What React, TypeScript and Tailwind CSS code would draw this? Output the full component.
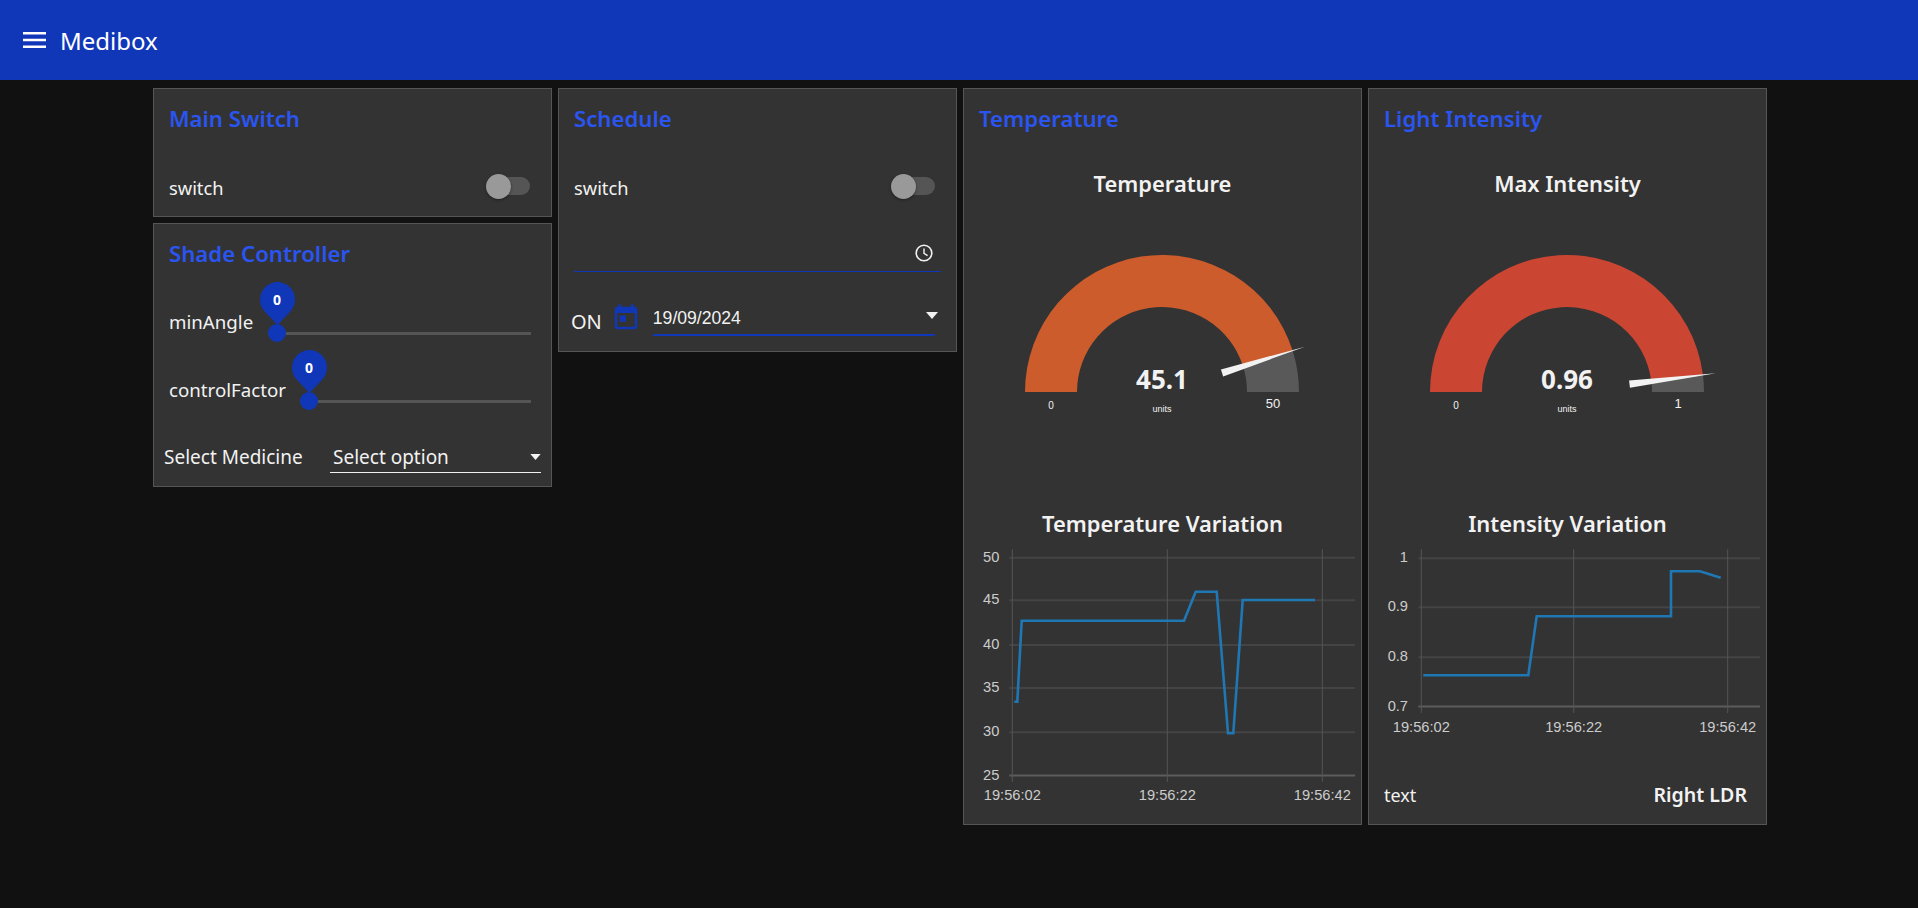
const sans = "font-['Noto_Sans','Open_Sans',sans-serif]";

const Toggle = () => (
  <div className="relative ml-auto h-[25px] w-[44px]">
    <div className="absolute left-[3px] right-0 top-[3.5px] h-[18px] rounded-full bg-[#555555]" />
    <div className="absolute left-0 top-0 h-[25px] w-[25px] rounded-full bg-[#999999] shadow-[0_1px_3px_rgba(0,0,0,0.4)]" />
  </div>
);

const Caret = ({ className }: { className: string }) => (
  <svg viewBox="0 0 12 7" className={className}>
    <path d="M0 0h12L6 7z" fill="#f2f2f2" />
  </svg>
);

const CardTitle = ({ children }: { children: string }) => (
  <div className="flex h-[58px] items-center pl-[15px] pt-[2px] text-[22.2px] font-semibold text-[#2a55f0]">{children}</div>
);

const Card = ({ height, children }: { height: string; children: React.ReactNode }) => (
  <section className={`${height} w-[399px] border border-[#555555] bg-[#333333]`}>{children}</section>
);

const SwitchRow = () => (
  <div className="mt-[15px] flex h-[48px] items-center pl-[15px] pr-[21px]">
    <span className="mt-[4px] text-[18.3px] text-[#f2f2f2]">switch</span>
    <Toggle />
  </div>
);

const SliderRow = ({ label, labelWidth, top }: { label: string; labelWidth: string; top: string }) => (
  <div className={`${top} flex h-[44px] items-center pl-[15px] pr-[20px]`}>
    <span className={`${labelWidth} mb-[1px] shrink-0 text-[18.7px] text-[#f2f2f2]`}>{label}</span>
    <div className="relative mt-[20px] flex h-[18px] flex-1 items-center">
      <div className="h-[3px] w-full bg-[#555555]" />
      <div className="absolute left-0 top-0 h-[18px] w-[18px] rounded-full bg-[#1037b8]" />
      <div className="absolute left-[-8.5px] top-[-42px] h-[43px] w-[35px]">
        <svg viewBox="0 0 35 43" className="h-[43px] w-[35px]">
          <path d="M17.5 43L5.1 29.9A17.5 17.5 0 1 1 29.9 29.9Z" fill="#1037b8" />
        </svg>
        <span className="absolute inset-x-0 top-[8px] text-center text-[14px] leading-[20px] font-bold text-white">0</span>
      </div>
    </div>
  </div>
);

const Gauge = ({ x0, cx, value, max, color, angle }: { x0: number; cx: number; value: string; max: string; color: string; angle: number }) => {
  const R = 137;
  const r = 85;
  const rad = (angle * Math.PI) / 180;
  const cy = 392;
  const px = (radius: number, a: number) => cx + radius * Math.cos(a);
  const py = (radius: number, a: number) => cy - radius * Math.sin(a);
  const arc = (from: number, to: number) =>
    `M${px(R, from)} ${py(R, from)}A${R} ${R} 0 0 1 ${px(R, to)} ${py(R, to)}L${px(r, to)} ${py(r, to)}A${r} ${r} 0 0 0 ${px(r, from)} ${py(r, from)}Z`;
  const nx = Math.sin(rad) * 3.6;
  const ny = Math.cos(rad) * 3.6;
  return (
    <svg viewBox={`${x0} 201 397 304`} className="block h-[304px] w-[397px]">
      <path d={arc(rad, 0)} fill="#595959" />
      <path d={arc(Math.PI, rad)} fill={color} />
      <polygon
        points={`${px(63, rad) - nx} ${py(63, rad) - ny} ${px(63, rad) + nx} ${py(63, rad) + ny} ${px(150, rad)} ${py(150, rad)}`}
        fill="#f2f2f2"
      />
      <text x={cx} y={389} textAnchor="middle" fontSize="26" fontWeight="700" fill="#f2f2f2" fontFamily="Noto Sans">{value}</text>
      <text x={cx} y={412} textAnchor="middle" fontSize="9" fill="#f2f2f2" fontFamily="Liberation Sans">units</text>
      <text x={cx - 111} y={409} textAnchor="middle" fontSize="10" fill="#f2f2f2" fontFamily="Liberation Sans">0</text>
      <text x={cx + 111} y={408} textAnchor="middle" fontSize="13" fill="#f2f2f2" fontFamily="Liberation Sans">{max}</text>
    </svg>
  );
};

type ChartProps = {
  viewBox: string;
  heightClass: string;
  xs: number[];
  yTicks: [string, number][];
  left: number;
  right: number;
  labelRight: number;
  top: number;
  bottom: number;
  labelY: number;
  points: string;
};

const Chart = ({ viewBox, heightClass, xs, yTicks, left, right, labelRight, top, bottom, labelY, points }: ChartProps) => {
  const times = ['19:56:02', '19:56:22', '19:56:42'];
  return (
    <svg viewBox={viewBox} className={`block w-[397px] ${heightClass}`}>
      {yTicks.map(([t, y], i) => (
        <g key={t}>
          <line x1={left - 3} x2={right} y1={y} y2={y} stroke={i === yTicks.length - 1 ? '#5c5c5c' : '#444444'} strokeWidth="2" />
          <text x={labelRight} y={y + 4} textAnchor="end" fontSize="14.67" fill="#cccccc" fontFamily="Liberation Sans">{t}</text>
        </g>
      ))}
      {xs.map((x, i) => (
        <g key={x}>
          <line x1={x} x2={x} y1={top} y2={bottom} stroke="#555555" strokeWidth="1" />
          <text x={x} y={labelY} textAnchor="middle" fontSize="14.67" fill="#cccccc" fontFamily="Liberation Sans">{times[i]}</text>
        </g>
      ))}
      <polyline points={points} fill="none" stroke="#1f77b4" strokeWidth="2.6" />
    </svg>
  );
};

const WidgetTitle = ({ children, className }: { children: string; className: string }) => (
  <div className={`${className} flex items-center justify-center text-[21.9px] font-semibold text-[#f2f2f2]`}>{children}</div>
);

export default function App() {
  return (
    <div className={`${sans} min-h-[908px] bg-[#111111]`}>
      <header className="flex h-[80px] items-center bg-[#1037b8] pl-[23px] text-white">
        <svg viewBox="0 0 23 16" className="h-[16px] w-[23px]">
          <path d="M0 0h23v2.4H0zM0 6.8h23v2.4H0zM0 13.6h23V16H0z" fill="#ffffff" />
        </svg>
        <span className="ml-[14px] mt-[2px] text-[24px]">Medibox</span>
      </header>

      <main className="flex gap-[6px] pl-[153px] pt-[8px]">
        <div className="flex flex-col gap-[6px]">
          <Card height="h-[129px]">
            <CardTitle>Main Switch</CardTitle>
            <SwitchRow />
          </Card>
          <Card height="h-[264px]">
            <CardTitle>Shade Controller</CardTitle>
            <SliderRow label="minAngle" labelWidth="w-[99px]" top="mt-[19px]" />
            <SliderRow label="controlFactor" labelWidth="w-[131px]" top="mt-[24px]" />
            <div className="mt-[28px] flex h-[32px] items-center pl-[10px] pr-[10px] text-[19px] text-[#f2f2f2]">
              <span className="w-[166px] shrink-0">Select Medicine</span>
              <div className="flex h-[32px] flex-1 items-center border-b border-[#f2f2f2] pl-[3px] pt-[1px]">
                <span>Select option</span>
                <Caret className="ml-auto h-[6px] w-[11px]" />
              </div>
            </div>
          </Card>
        </div>

        <Card height="h-[264px]">
          <CardTitle>Schedule</CardTitle>
          <SwitchRow />
          <div className="ml-[15px] mr-[15px] mt-[25px] flex h-[37px] items-center justify-end border-b border-[#1037b8] pb-[1px] pr-[8px]">
            <svg viewBox="0 0 18 18" className="h-[18px] w-[18px]">
              <circle cx="9" cy="9" r="7.8" fill="none" stroke="#f2f2f2" strokeWidth="1.6" />
              <path d="M9 4.5V9.4l3.6 2.2" fill="none" stroke="#f2f2f2" strokeWidth="1.4" />
            </svg>
          </div>
          <div className="ml-[12px] mt-[28px] flex h-[36px] items-center">
            <span className="mt-[8px] text-[20px] text-[#f2f2f2]">ON</span>
            <svg viewBox="0 0 24 24" className="ml-[9px] h-[30px] w-[30px] shrink-0">
              <path
                d="M19 3h-1V1h-2v2H8V1H6v2H5c-1.11 0-1.99.9-1.99 2L3 19c0 1.1.89 2 2 2h14c1.1 0 2-.9 2-2V5c0-1.1-.9-2-2-2zm0 16H5V8h14v11zM7 10h5v5H7z"
                fill="#1037b8"
              />
            </svg>
            <div className="ml-[12px] flex h-[35px] w-[282px] items-center border-b-2 border-[#1037b8] pt-[2px] font-['Liberation_Sans',sans-serif] text-[17.6px] text-[#f2f2f2]">
              <span>19/09/2024</span>
              <Caret className="ml-auto mb-[6px] mr-[-3px] h-[7px] w-[12px]" />
            </div>
          </div>
        </Card>

        <Card height="h-[737px]">
          <CardTitle>Temperature</CardTitle>
          <WidgetTitle className="mt-[20px] h-[34px]">Temperature</WidgetTitle>
          <Gauge x0={964} cx={1162} value="45.1" max="50" color="#cd5c2d" angle={17.6} />
          <WidgetTitle className="h-[38px]">Temperature Variation</WidgetTitle>
          <Chart
            viewBox="964 543 397 268"
            heightClass="h-[268px]"
            xs={[1012.3, 1167.3, 1322.3]}
            yTicks={[['50', 557.7], ['45', 600.3], ['40', 645], ['35', 688], ['30', 732.3], ['25', 775.5]]}
            left={1012.3}
            right={1355}
            labelRight={999.3}
            top={549.3}
            bottom={782}
            labelY={800}
            points="1014.3,701.7 1017.3,701.7 1021.7,620.7 1184,620.7 1195.7,591.7 1216.7,591.7 1228,733.3 1233.3,733.3 1242.7,600 1315,600"
          />
        </Card>

        <Card height="h-[737px]">
          <CardTitle>Light Intensity</CardTitle>
          <WidgetTitle className="mt-[20px] h-[34px]">Max Intensity</WidgetTitle>
          <Gauge x0={1369} cx={1567} value="0.96" max="1" color="#ca4633" angle={7.2} />
          <WidgetTitle className="h-[38px]">Intensity Variation</WidgetTitle>
          <Chart
            viewBox="1369 543 397 217"
            heightClass="h-[217px]"
            xs={[1421.3, 1573.7, 1727.7]}
            yTicks={[['1', 558.3], ['0.9', 607.3], ['0.8', 657.3], ['0.7', 706.5]]}
            left={1421.3}
            right={1760}
            labelRight={1408}
            top={549.3}
            bottom={713}
            labelY={732}
            points="1423.3,675.3 1528.3,675.3 1536.7,616.3 1671,616.3 1671,571.3 1700,571.3 1720.7,577.7"
          />
          <div className="mt-[15px] flex h-[40px] items-center justify-between pl-[15px] pr-[19px] text-[18px] text-[#f2f2f2]">
            <span>text</span>
            <span className="text-[19.6px] font-semibold">Right LDR</span>
          </div>
        </Card>
      </main>
    </div>
  );
}
